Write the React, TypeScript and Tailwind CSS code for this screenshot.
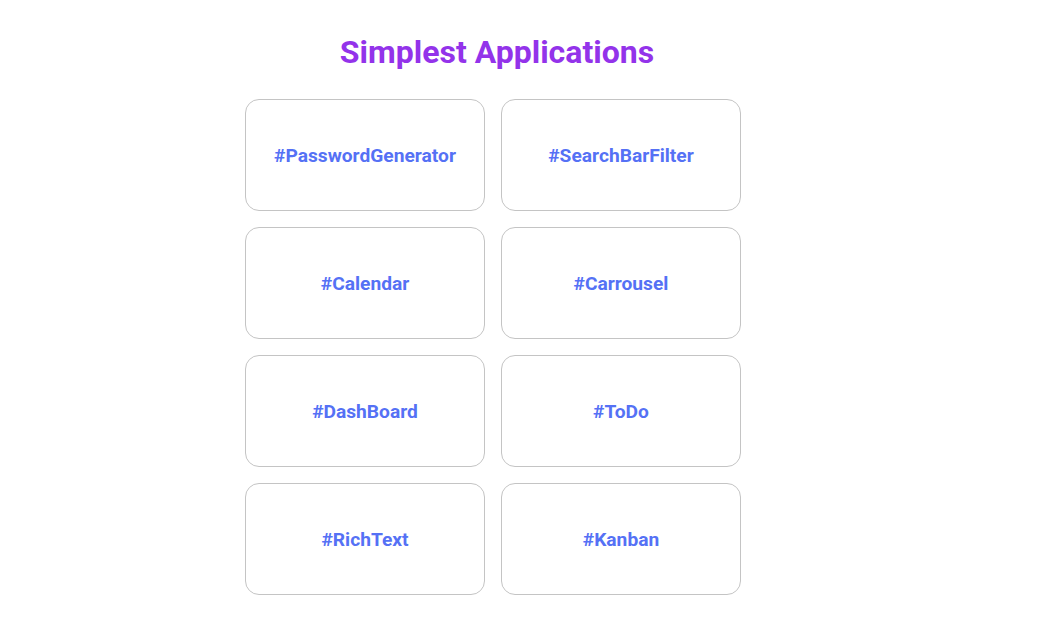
const APPS = [
  'PasswordGenerator',
  'SearchBarFilter',
  'Calendar',
  'Carrousel',
  'DashBoard',
  'ToDo',
  'RichText',
  'Kanban',
];

export default function App() {
  return (
    <div className="min-h-screen bg-white font-['Roboto',sans-serif]">
      <div className="w-[986px] flex flex-col items-center pt-[33px]">
        <h1 className="text-[32px] leading-[38px] font-bold text-[#9333ea] pl-2">Simplest Applications</h1>
        <div className="mt-[28px] grid grid-cols-[240px_240px] gap-4">
          {APPS.map((name) => (
            <div
              key={name}
              className="h-[112px] flex items-center justify-center pt-[2px] rounded-[14px] border border-[#c4c4c4]"
            >
              <span className="text-[19.2px] font-bold text-[#5571f5]">#{name}</span>
            </div>
          ))}
        </div>
      </div>
    </div>
  );
}
